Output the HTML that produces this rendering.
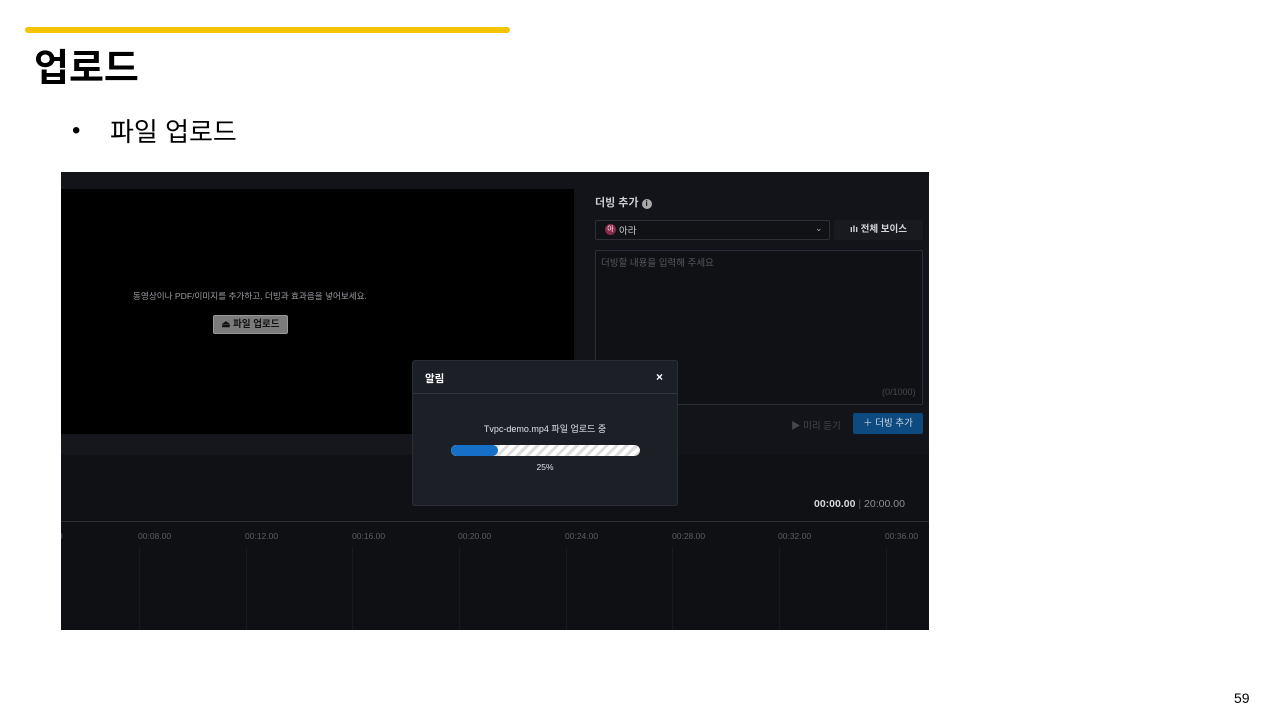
<!DOCTYPE html>
<html><head><meta charset="utf-8"><style>
*{margin:0;padding:0;box-sizing:border-box}
body{width:1280px;height:720px;background:#fff;position:relative;overflow:hidden;font-family:"Liberation Sans","Noto Sans CJK KR",sans-serif}
.a{position:absolute}
.t{font-size:11px;color:#6b6f78;white-space:nowrap}
</style></head><body>
<div class="a" style="left:25px;top:27px;width:485px;height:6px;background:#f5c400;border-radius:3px"></div>
<div class="a" style="left:34px;top:37px;font-size:38px;font-weight:bold;color:#000">업로드</div>
<div class="a" style="left:72px;top:117px;font-size:24px;color:#000">•</div>
<div class="a" style="left:110px;top:112px;font-size:26px;color:#000">파일 업로드</div>

<div class="a" style="left:61px;top:172px;width:868px;height:458px;background:#121419;overflow:hidden">
  <div class="a" style="left:0;top:17px;width:513px;height:245px;background:#000"></div>
  <div class="a" style="left:0;top:262px;width:513px;height:21px;background:#15171c"></div>
  <div class="a" style="left:72px;top:118px;font-size:8.6px;color:#9a9da3;white-space:nowrap">동영상이나 PDF/이미지를 추가하고, 더빙과 효과음을 넣어보세요.</div>
  <div class="a" style="left:152px;top:143px;width:75px;height:19px;background:#7b7b7b;border:1px solid #999;border-radius:2px;font-size:9.5px;color:#111;font-weight:bold;text-align:center;line-height:17px">⏏ 파일 업로드</div>

  <div class="a" style="left:534px;top:22px;font-size:11px;color:#c9ccd2;font-weight:bold">더빙 추가 <span style="display:inline-block;width:10px;height:10px;border-radius:50%;background:#aaa;color:#121419;font-size:8px;text-align:center;line-height:10px">i</span></div>
  <div class="a" style="left:534px;top:48px;width:235px;height:20px;border:1px solid #2c2f36;border-radius:2px;background:#101216"></div>
  <div class="a" style="left:544px;top:52px;width:11px;height:11px;border-radius:50%;background:#8a2a4a;font-size:7px;color:#fff;text-align:center;line-height:11px">아</div>
  <div class="a" style="left:558px;top:51px;font-size:9.5px;color:#c9ccd2">아라</div>
  <div class="a" style="left:754px;top:51px;font-size:9px;color:#aaa">⌄</div>
  <div class="a" style="left:773px;top:48px;width:89px;height:20px;background:#181a1f;font-size:9.5px;color:#d5d7db;font-weight:bold;text-align:center;line-height:20px">ılı 전체 보이스</div>
  <div class="a" style="left:534px;top:78px;width:328px;height:155px;border:1px solid #2c2f36;border-radius:2px;background:#0f1115"></div>
  <div class="a" style="left:540px;top:83px;font-size:9.5px;color:#55585f">더빙할 내용을 입력해 주세요</div>
  <div class="a" style="left:821px;top:215px;font-size:9px;color:#45484e">(0/1000)</div>
  <div class="a" style="left:730px;top:246px;font-size:9.5px;color:#45484e">▶ 미리 듣기</div>
  <div class="a" style="left:792px;top:241px;width:70px;height:21px;background:#0c4a80;border-radius:2px;font-size:9.5px;color:#cfd8e3;text-align:center;line-height:21px">＋ 더빙 추가</div>

  <div class="a" style="left:0;top:283px;width:868px;height:66px;background:#0f1115"></div>
  <div class="a" style="left:753px;top:326px;font-size:10.5px;color:#d5d7db;font-weight:bold;white-space:nowrap">00:00.00 <span style="color:#555;font-weight:normal">|</span> <span style="color:#8b8e94;font-weight:normal">20:00.00</span></div>
  <div class="a" style="left:0;top:349px;width:868px;height:1px;background:#2a2d33"></div>
  <div class="a" style="left:0;top:350px;width:868px;height:108px;background:#0e1014"></div>
  <div class="a t" style="left:-3px;top:359px;font-size:8.5px;color:#5a5d63">0</div>
  <div class="a t" style="left:77px;top:359px;font-size:8.5px;color:#5a5d63">00:08.00</div>
  <div class="a t" style="left:184px;top:359px;font-size:8.5px;color:#5a5d63">00:12.00</div>
  <div class="a t" style="left:291px;top:359px;font-size:8.5px;color:#5a5d63">00:16.00</div>
  <div class="a t" style="left:397px;top:359px;font-size:8.5px;color:#5a5d63">00:20.00</div>
  <div class="a t" style="left:504px;top:359px;font-size:8.5px;color:#5a5d63">00:24.00</div>
  <div class="a t" style="left:611px;top:359px;font-size:8.5px;color:#5a5d63">00:28.00</div>
  <div class="a t" style="left:717px;top:359px;font-size:8.5px;color:#5a5d63">00:32.00</div>
  <div class="a t" style="left:824px;top:359px;font-size:8.5px;color:#5a5d63">00:36.00</div>
  <div class="a" style="left:78px;top:375px;width:1px;height:83px;background:#181a1f"></div>
  <div class="a" style="left:185px;top:375px;width:1px;height:83px;background:#181a1f"></div>
  <div class="a" style="left:291px;top:375px;width:1px;height:83px;background:#181a1f"></div>
  <div class="a" style="left:398px;top:375px;width:1px;height:83px;background:#181a1f"></div>
  <div class="a" style="left:505px;top:375px;width:1px;height:83px;background:#181a1f"></div>
  <div class="a" style="left:611px;top:375px;width:1px;height:83px;background:#181a1f"></div>
  <div class="a" style="left:718px;top:375px;width:1px;height:83px;background:#181a1f"></div>
  <div class="a" style="left:825px;top:375px;width:1px;height:83px;background:#181a1f"></div>

  <div class="a" style="left:351px;top:188px;width:266px;height:146px;background:#1c1f26;border-radius:3px;border:1px solid #2a2e36">
    <div class="a" style="left:0;top:0;width:264px;height:33px;border-bottom:1px solid #30343c"></div>
    <div class="a" style="left:12px;top:10px;font-size:10.5px;color:#fff;font-weight:bold">알림</div>
    <div class="a" style="left:243px;top:9px;font-size:12px;color:#fff;font-weight:bold">×</div>
    <div class="a" style="left:0;top:61px;width:264px;text-align:center;font-size:9px;color:#e0e2e6">Tvpc-demo.mp4 파일 업로드 중</div>
    <div class="a" style="left:38px;top:84px;width:189px;height:11px;border-radius:6px;background:repeating-linear-gradient(135deg,#fff 0 4px,#dcdcdc 4px 7px);overflow:hidden">
      <div style="width:47px;height:11px;background:#1670c8;border-radius:6px"></div>
    </div>
    <div class="a" style="left:0;top:101px;width:264px;text-align:center;font-size:8.5px;color:#e0e2e6">25%</div>
  </div>
</div>
<div class="a" style="left:1234px;top:690px;font-size:14px;color:#000">59</div>
</body></html>
